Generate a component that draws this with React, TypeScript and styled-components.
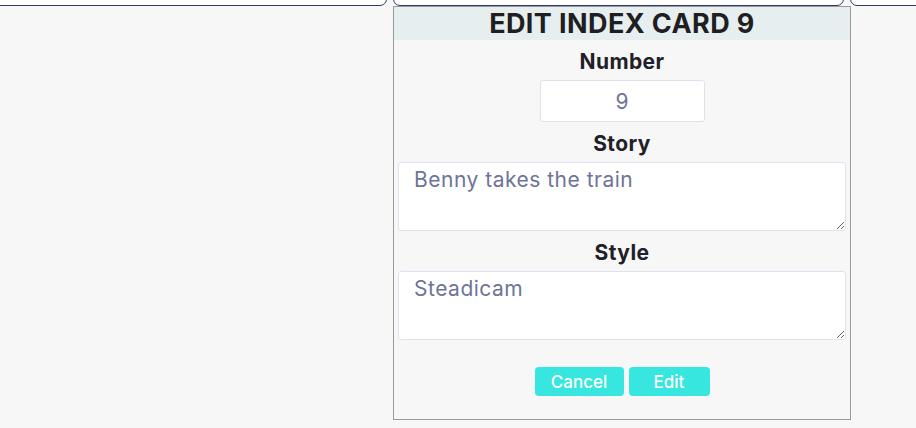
import React from "react";
import styled, { createGlobalStyle } from "styled-components";

const Global = createGlobalStyle`
  html, body { margin: 0; padding: 0; background: #f7f7f7; }
  body { font-family: "Inter", "Liberation Sans", sans-serif; overflow: hidden; }
  * { box-sizing: border-box; }
`;

const Page = styled.div`
  position: relative;
  width: 916px;
  height: 428px;
  overflow: hidden;
  background: #f7f7f7;
`;

const CardRow = styled.div`
  display: flex;
  gap: 6px;
  margin-left: -64px;
  margin-top: -40px;
`;

const Card = styled.div`
  flex: 0 0 451px;
  height: 46px;
  background: #ffffff;
  border: 1px solid #2c3a6a;
  border-radius: 0 0 7px 7px;
`;

const Modal = styled.div`
  position: absolute;
  left: 393px;
  top: 6px;
  width: 458px;
  height: 414px;
  background: #f7f7f7;
  border: 1px solid #9a9a9a;
  display: flex;
  flex-direction: column;
  align-items: center;
`;

const Header = styled.div`
  align-self: stretch;
  height: 33px;
  background: #e6eef0;
  display: flex;
  align-items: center;
  justify-content: center;
  font-size: 27px;
  font-weight: 700;
  color: #1f1f22;
  letter-spacing: 0.4px;
`;

const Label = styled.div<{ $top: number }>`
  margin-top: ${(p) => p.$top}px;
  height: 24px;
  line-height: 24px;
  font-size: 21px;
  font-weight: 700;
  color: #1f2128;
  letter-spacing: 0.4px;
  margin-bottom: 6px;
`;

const NumberInput = styled.input`
  width: 165px;
  height: 42px;
  border: 1px solid #dfe1ee;
  border-radius: 3px;
  background: #ffffff;
  text-align: center;
  font-family: inherit;
  font-size: 21px;
  color: #6e7498;
  outline: none;
`;

const Area = styled.textarea`
  width: 448px;
  height: 69px;
  border: 1px solid #dfe1ee;
  border-radius: 3px;
  background: #ffffff;
  padding: 3px 15px;
  font-family: inherit;
  font-size: 21px;
  letter-spacing: 0.5px;
  line-height: 28px;
  color: #6e7498;
  outline: none;
  resize: both;
`;

const Buttons = styled.div`
  margin-top: 27px;
  display: flex;
  gap: 5px;
`;

const Button = styled.button<{ $w: number }>`
  width: ${(p) => p.$w}px;
  height: 29px;
  border: none;
  border-radius: 4px;
  background: #36e6df;
  color: #ffffff;
  font-family: inherit;
  font-size: 17px;
  font-weight: 500;
  padding: 0;
  cursor: pointer;
`;

export default function App() {
  return (
    <Page>
      <Global />
      <CardRow>
        <Card />
        <Card />
        <Card />
      </CardRow>
      <Modal>
        <Header>EDIT INDEX CARD 9</Header>
        <Label $top={10}>Number</Label>
        <NumberInput defaultValue="9" />
        <Label $top={10}>Story</Label>
        <Area defaultValue="Benny takes the train" />
        <Label $top={10}>Style</Label>
        <Area defaultValue="Steadicam" />
        <Buttons>
          <Button $w={89}>Cancel</Button>
          <Button $w={81}>Edit</Button>
        </Buttons>
      </Modal>
    </Page>
  );
}
